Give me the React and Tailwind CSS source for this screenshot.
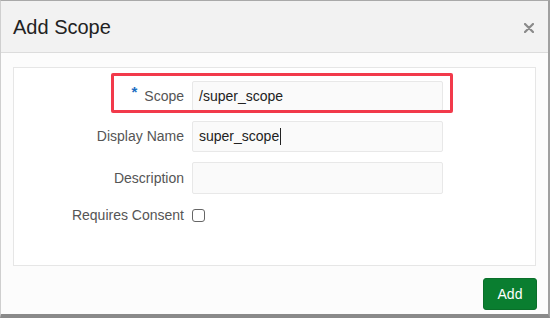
export default function App() {
  const font = { fontFamily: '"Liberation Sans", Arial, sans-serif' };
  return (
    <div
      className="w-[550px] h-[318px] flex flex-col border-t border-l border-r-2 border-b-4 border-t-[#a9a9a9] border-l-[#cfcfcf] border-r-[#a0a0a0] border-b-[#8a8a8a] bg-[#fcfcfc] overflow-hidden"
      style={font}
    >
      <div className="h-[52px] shrink-0 flex items-center justify-between px-[12px] bg-[#f2f2f2] border-b border-[#dcdcdc]">
        <span className="text-[20px] text-[#222] leading-none">Add Scope</span>
        <svg width="10" height="10" viewBox="0 0 10 10" className="mr-[2px] mt-[3px]">
          <path d="M1 1L9 9M9 1L1 9" stroke="#8a8a8a" strokeWidth="2.2" strokeLinecap="round" />
        </svg>
      </div>

      <div className="flex-1 flex flex-col px-[12px] pt-[14px]">
        <div className="relative h-[199px] bg-white border border-[#e6e6e6] pt-[13px]">
          <div className="grid grid-cols-[170px_251px] gap-x-2 gap-y-[10px] items-center text-[14px]">
            <label className="text-right text-[#555]">
              <span className="text-[#1b6ec2] text-[15px] font-bold relative top-[-4px] mr-[7px]">*</span>
              Scope
            </label>
            <div className="h-[30px] border border-[#e8e8e8] bg-[#fafafa] rounded-[2px] flex items-center px-[6px] text-[#222]">
              /super_scope
            </div>

            <label className="text-right text-[#555]">Display Name</label>
            <div className="h-[31px] border border-[#e8e8e8] bg-[#fafafa] rounded-[2px] flex items-center px-[6px] text-[#222]">
              super_scope
              <span className="inline-block w-px h-[17px] bg-[#222] ml-px" />
            </div>

            <label className="text-right text-[#555]">Description</label>
            <div className="h-[32px] border border-[#e8e8e8] bg-[#fafafa] rounded-[2px]" />

            <label className="text-right text-[#555] mt-[1px]">Requires Consent</label>
            <div className="flex items-center mt-[1px]">
              <span className="w-[13px] h-[13px] border border-[#666] rounded-[3px] bg-white" />
            </div>
          </div>

          <div className="absolute left-[97px] top-[5px] w-[342px] h-[40px] border-[3px] border-[#f23a4b] rounded-[2px] pointer-events-none" />
        </div>

        <div className="flex justify-end mt-[12px] mr-[-1px]">
          <button className="w-[54px] h-[32px] bg-[#0a7e30] rounded-[3px] border border-[#0a6f2a] text-white text-[14px]">
            Add
          </button>
        </div>
      </div>
    </div>
  );
}
